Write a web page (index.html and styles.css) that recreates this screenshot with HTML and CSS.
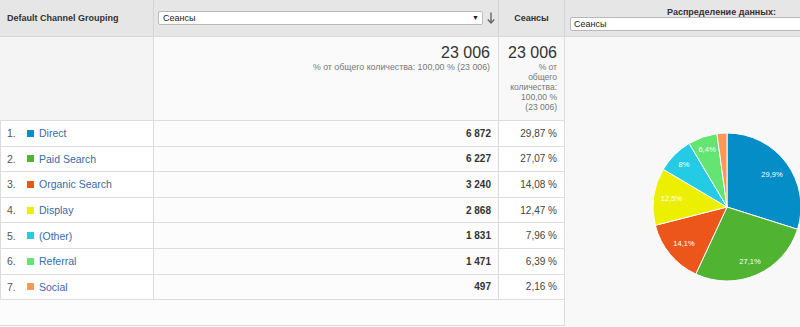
FILE: index.html
```html
<!DOCTYPE html>
<html lang="ru">
<head>
<meta charset="utf-8">
<title>Report</title>
<link rel="stylesheet" href="styles.css">
</head>
<body>
<div class="page">
  <div class="report">
    <div class="row head">
      <div class="cell h1">Default Channel Grouping</div>
      <div class="cell h2">
        <div class="select"><span>Сеансы</span><span class="caret">▼</span></div>
        <svg class="sort" width="8" height="12" viewBox="0 0 8 12"><path d="M4 0.5V11M0.8 7.6L4 11L7.2 7.6" fill="none" stroke="#666" stroke-width="1.4"/></svg>
      </div>
      <div class="cell h3">Сеансы</div>
    </div>
    <div class="row total">
      <div class="cell t1"></div>
      <div class="cell t2"><div class="big">23 006</div><div class="sub">% от общего количества: 100,00 % (23 006)</div></div>
      <div class="cell t3"><div class="big">23 006</div><div class="sub sub3">% от<br>общего<br>количества:<br>100,00 %<br>(23 006)</div></div>
    </div>
    <div class="row item">
      <div class="cell name"><span class="idx">1.</span><span class="sw s1"></span><span class="lnk">Direct</span></div>
      <div class="cell num">6 872</div>
      <div class="cell pct">29,87 %</div>
    </div>
    <div class="row item">
      <div class="cell name"><span class="idx">2.</span><span class="sw s2"></span><span class="lnk">Paid Search</span></div>
      <div class="cell num">6 227</div>
      <div class="cell pct">27,07 %</div>
    </div>
    <div class="row item">
      <div class="cell name"><span class="idx">3.</span><span class="sw s3"></span><span class="lnk">Organic Search</span></div>
      <div class="cell num">3 240</div>
      <div class="cell pct">14,08 %</div>
    </div>
    <div class="row item">
      <div class="cell name"><span class="idx">4.</span><span class="sw s4"></span><span class="lnk">Display</span></div>
      <div class="cell num">2 868</div>
      <div class="cell pct">12,47 %</div>
    </div>
    <div class="row item">
      <div class="cell name"><span class="idx">5.</span><span class="sw s5"></span><span class="lnk">(Other)</span></div>
      <div class="cell num">1 831</div>
      <div class="cell pct">7,96 %</div>
    </div>
    <div class="row item">
      <div class="cell name"><span class="idx">6.</span><span class="sw s6"></span><span class="lnk">Referral</span></div>
      <div class="cell num">1 471</div>
      <div class="cell pct">6,39 %</div>
    </div>
    <div class="row item">
      <div class="cell name"><span class="idx">7.</span><span class="sw s7"></span><span class="lnk">Social</span></div>
      <div class="cell num">497</div>
      <div class="cell pct">2,16 %</div>
    </div>
    <div class="foot"></div>
  </div>
  <div class="panel">
    <div class="pinner">
      <div class="phead">
        <div class="ptitle">Распределение данных:</div>
        <div class="pselect">Сеансы</div>
      </div>
      <div class="pbody">
        <svg class="pie" width="160" height="160" viewBox="-80 -80 160 160">
          <g stroke="#fff" stroke-width="1" stroke-linejoin="round">
            <path fill="#058dc7" d="M0 0L0 -74A74 74 0 0 1 70.57 22.29Z"/>
            <path fill="#50b432" d="M0 0L70.57 22.29A74 74 0 0 1 -31.25 67.07Z"/>
            <path fill="#ed561b" d="M0 0L-31.25 67.07A74 74 0 0 1 -71.70 18.32Z"/>
            <path fill="#edef00" d="M0 0L-71.70 18.32A74 74 0 0 1 -63.72 -37.63Z"/>
            <path fill="#24cbe5" d="M0 0L-63.72 -37.63A74 74 0 0 1 -37.87 -63.57Z"/>
            <path fill="#64e572" d="M0 0L-37.87 -63.57A74 74 0 0 1 -10.01 -73.32Z"/>
            <path fill="#ff9655" d="M0 0L-10.01 -73.32A74 74 0 0 1 0 -74Z"/>
          </g>
          <g class="plabels" text-anchor="middle">
            <text x="45" y="-30">29,9%</text>
            <text x="23" y="57">27,1%</text>
            <text x="-43" y="39">14,1%</text>
            <text x="-55.5" y="-6">12,5%</text>
            <text x="-43" y="-40">8%</text>
            <text x="-20" y="-55">6,4%</text>
          </g>
        </svg>
      </div>
    </div>
  </div>
</div>
</body>
</html>
```
FILE: styles.css
```css
html, body {
  margin: 0;
  padding: 0;
  background: #fff;
  overflow: hidden;
}
body {
  font-family: "Liberation Sans", Arial, sans-serif;
  color: #333;
  width: 800px;
  height: 327px;
}
.page {
  display: flex;
  width: 800px;
  height: 327px;
  align-items: stretch;
}
.report {
  flex: 0 0 565px;
  display: flex;
  flex-direction: column;
}
.row {
  display: grid;
  grid-template-columns: 154px 345px 66px;
  box-sizing: border-box;
}
.cell {
  box-sizing: border-box;
  border-right: 1px solid #dcdcdc;
  min-width: 0;
}
.head {
  height: 37px;
}
.head .cell {
  background: #e6e6e6;
  border-bottom: 1px solid #d8d8d8;
  border-right-color: #d4d4d4;
  display: flex;
  align-items: center;
  font-weight: bold;
  font-size: 9px;
}
.h1 {
  padding-left: 7px;
  padding-bottom: 1px;
}
.h2 {
  padding-left: 4px;
  gap: 4px;
}
.h3 {
  justify-content: center;
  padding-bottom: 1px;
}
.select {
  flex: 0 0 325px;
  box-sizing: border-box;
  height: 14px;
  margin-bottom: 1px;
  background: #fff;
  border: 1px solid #b9b9b9;
  border-radius: 2px;
  display: flex;
  align-items: center;
  justify-content: space-between;
  padding: 0 3px 0 4px;
  font-weight: normal;
  font-size: 9px;
  color: #222;
}
.caret {
  font-size: 7px;
  color: #222;
}
.sort {
  display: block;
  margin-bottom: 1px;
}
.total {
  height: 84px;
}
.total .cell {
  border-bottom: 1px solid #dedede;
}
.t1 {
  background: #f4f4f4;
}
.t2 {
  background: #fafafa;
  text-align: right;
  padding: 7px 8px 0 0;
}
.t3 {
  background: #f8f8f8;
  text-align: right;
  padding: 7px 7px 0 0;
}
.big {
  font-size: 16px;
  line-height: 18px;
  color: #333;
}
.sub {
  font-size: 8.8px;
  line-height: 10px;
  color: #777;
}
.sub3 {
  font-size: 8.5px;
}
.item {
  height: 25.6px;
}
.item .cell {
  border-bottom: 1px solid #dedede;
  display: flex;
  align-items: center;
  font-size: 10px;
}
.name {
  background: #fff;
  border-left: 1px solid #dcdcdc;
  padding-left: 6px;
  font-size: 10.5px !important;
}
.idx {
  width: 20px;
  color: #555;
}
.sw {
  width: 7px;
  height: 7px;
  margin-right: 5px;
  flex: 0 0 7px;
}
.s1 { background: #058dc7; }
.s2 { background: #50b432; }
.s3 { background: #ed561b; }
.s4 { background: #edef00; }
.s5 { background: #24cbe5; }
.s6 { background: #64e572; }
.s7 { background: #ff9655; }
.lnk {
  color: #3a6aa6;
}
.num {
  background: #fcfcfc;
  justify-content: flex-end;
  padding-right: 7px;
  font-weight: bold;
  color: #333;
}
.pct {
  background: #fff;
  justify-content: flex-end;
  padding-right: 7px;
  color: #444;
}
.foot {
  width: 565px;
  box-sizing: border-box;
  height: 26px;
  background: #fcfcfc;
  border-right: 1px solid #dcdcdc;
  border-bottom: 1px solid #dcdcdc;
}
.panel {
  flex: 1 1 auto;
  min-width: 0;
  overflow: hidden;
  background: #f8f8f8;
}
.pinner {
  width: 320px;
  height: 100%;
  display: flex;
  flex-direction: column;
}
.phead {
  height: 37px;
  box-sizing: border-box;
  background: #e6e6e6;
  border-bottom: 1px solid #d8d8d8;
  padding: 7px 5px 0 5px;
}
.ptitle {
  font-size: 9px;
  font-weight: bold;
  line-height: 10px;
  text-align: center;
  color: #333;
  padding-right: 7px;
}
.pselect {
  height: 14px;
  box-sizing: border-box;
  background: #fff;
  border: 1px solid #b9b9b9;
  border-radius: 2px;
  font-size: 9px;
  line-height: 12px;
  padding-left: 3px;
  color: #222;
}
.pbody {
  flex: 1;
  padding: 90px 0 0 82px;
}
.pie {
  display: block;
}
.plabels {
  font-family: "Liberation Sans", Arial, sans-serif;
  font-size: 7.5px;
  fill: #fff;
}
```
